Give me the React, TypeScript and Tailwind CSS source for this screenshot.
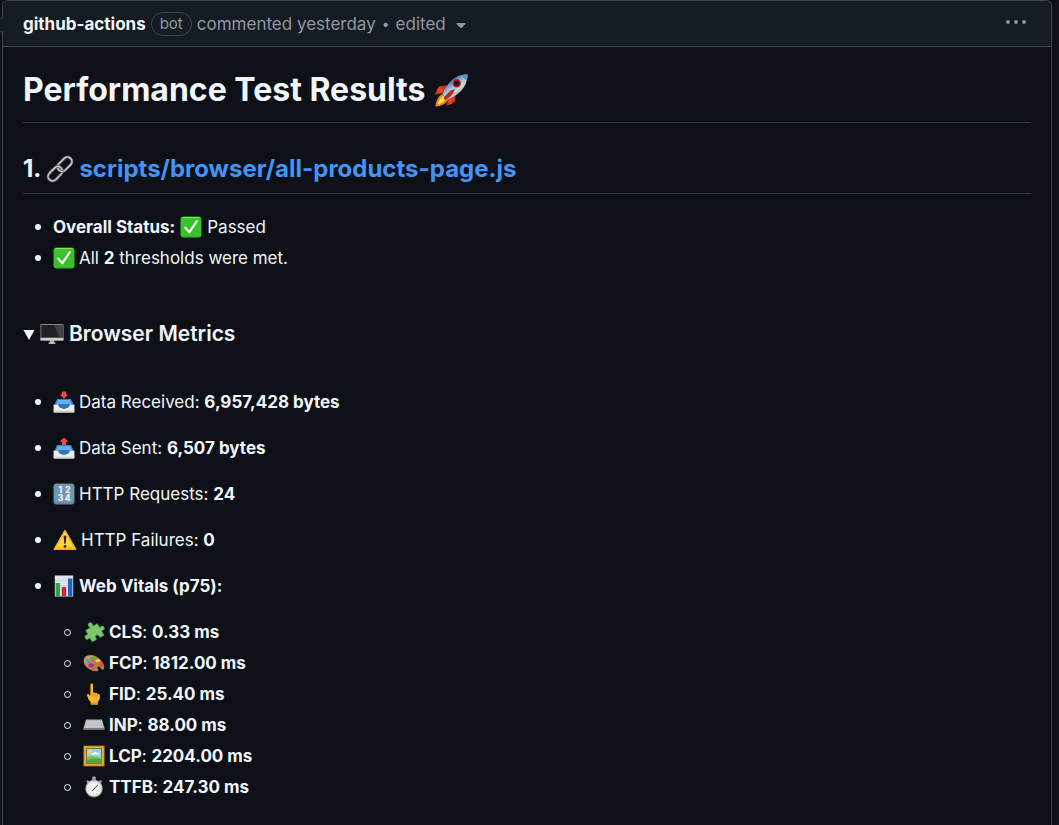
import type { ReactNode } from 'react';

function Rocket() {
  return (
    <svg viewBox="0 0 36 36" className="size-9 shrink-0" aria-hidden="true">
      <defs>
        <linearGradient id="rocketBody" x1="0.2" y1="0.1" x2="0.8" y2="0.9">
          <stop offset="0.2" stopColor="#3f78ad" />
          <stop offset="0.45" stopColor="#9fc0d8" />
          <stop offset="0.65" stopColor="#d5d9da" />
          <stop offset="1" stopColor="#5c6a74" />
        </linearGradient>
        <linearGradient id="rocketFin" x1="1" y1="0" x2="0" y2="1">
          <stop offset="0" stopColor="#b81d16" />
          <stop offset="0.6" stopColor="#ee4a1f" />
          <stop offset="1" stopColor="#8e1710" />
        </linearGradient>
      </defs>
      <path d="M14 13 L5 14.5 Q3 17 0.5 23 L9 21 Z" fill="url(#rocketFin)" />
      <path d="M22 20 L21 29 Q18 32 12 34.5 L14 26 Z" fill="url(#rocketFin)" />
      <path d="M8 22 Q2 26 1.5 34.5 Q10 34 14 28 Z" fill="#f58a1c" />
      <path d="M9 24 Q5 27 3.5 32.5 Q9 31 12 27 Z" fill="#ffe25a" />
      <path d="M33.5 2.5 Q24 1.5 16.5 9.5 Q11 15 8.5 22.5 L13.5 27.5 Q21 25 26.5 19.5 Q33.5 12 33.5 2.5 Z" fill="url(#rocketBody)" />
      <path d="M33.5 2.5 Q30 2.3 27.5 3.2 Q29.5 6.5 32.6 8.5 Q33.5 5.5 33.5 2.5 Z" fill="#5b94c7" />
      <path d="M21 17 Q14 19 9.5 26.5 L11 28 Q18 25 21 17 Z" fill="#bd2118" />
      <circle cx="22.7" cy="11.3" r="4.2" fill="#c4231e" />
      <circle cx="22.7" cy="11.3" r="2.9" fill="#241a22" />
    </svg>
  );
}

function ChainLink() {
  return (
    <svg viewBox="0 0 28 28" className="size-7 shrink-0" aria-hidden="true" fill="none">
      <g transform="rotate(-45 14 14)">
        <rect x="-1" y="9.5" width="16.5" height="9" rx="4.5" stroke="#606468" strokeWidth="3" />
        <rect x="-1" y="9.5" width="16.5" height="9" rx="4.5" stroke="#d3d5d6" strokeWidth="1.2" />
        <rect x="12.5" y="9.5" width="16.5" height="9" rx="4.5" stroke="#606468" strokeWidth="3" />
        <rect x="12.5" y="9.5" width="16.5" height="9" rx="4.5" stroke="#dfe0e1" strokeWidth="1.2" />
        <path d="M8 9.5 H11 Q15.5 9.5 15.5 14" stroke="#606468" strokeWidth="3" />
        <path d="M7 9.5 H11 Q15.5 9.5 15.5 14" stroke="#dfe0e1" strokeWidth="1.2" />
      </g>
    </svg>
  );
}

function Check() {
  return (
    <svg viewBox="0 0 22 22" className="size-[22px] shrink-0" aria-hidden="true">
      <rect x="0.5" y="0.5" width="21" height="21" rx="3.2" fill="#2fb32b" />
      <path d="M1.5 2.5 Q2 1 4 1 H18 Q20 1 20.5 2.5 Z" fill="#8be06d" />
      <rect x="1" y="2.2" width="20" height="18.4" rx="2.4" fill="#39c22c" />
      <path d="M5.3 11.6 L9.3 16.3 L16.8 5.2" fill="none" stroke="#fff" strokeWidth="2.1" strokeLinecap="round" strokeLinejoin="round" />
    </svg>
  );
}

function Desktop() {
  return (
    <svg viewBox="0 0 24 24" className="size-6 shrink-0" aria-hidden="true">
      <path d="M10 18 H14 L14.5 21.5 H9.5 Z" fill="#a7a9aa" />
      <rect x="8.5" y="20.6" width="7" height="1.2" rx="0.4" fill="#d2d3d4" />
      <rect x="0.5" y="2" width="23" height="16.5" rx="0.8" fill="#8e9092" />
      <rect x="0.5" y="15.8" width="23" height="2.8" rx="0.6" fill="#cbcdce" />
      <rect x="1.3" y="2.9" width="21.4" height="12.7" fill="#202123" />
      <path d="M14 2.9 H22.7 V15.6 H19.5 Z" fill="#3f4144" />
    </svg>
  );
}

function Tray({ down = false }: { down?: boolean }) {
  return (
    <svg viewBox="0 0 22 22" className="size-[22px] shrink-0" aria-hidden="true">
      <path d="M4 8 H18 L21.3 15 H0.7 Z" fill="#3b7fcb" />
      <path d="M5 9 H17 L19 13.8 H3 Z" fill="#67b0ef" />
      <path d="M0.6 13.8 H5 Q6.5 17.6 11 17.6 Q15.5 17.6 17 13.8 H21.4 V20.5 Q21.4 21.5 20.4 21.5 H1.6 Q0.6 21.5 0.6 20.5 Z" fill="#f1eee9" />
      <path d="M5 13 H17 Q15.5 17.6 11 17.6 Q6.5 17.6 5 13 Z" fill="#2f78c8" />
      <path d="M0.6 19.7 H21.4 V20.5 Q21.4 21.5 20.4 21.5 H1.6 Q0.6 21.5 0.6 20.5 Z" fill="#d4d0ca" />
      {down ? (
        <path d="M9 0.5 H13 V3.6 H15.3 L11 7.8 L6.7 3.6 H9 Z" fill="#ee4b3f" />
      ) : (
        <path d="M11 0.5 L15.3 4.7 H13 V8 H9 V4.7 H6.7 Z" fill="#ee4b3f" />
      )}
    </svg>
  );
}

function Numbers() {
  return (
    <svg viewBox="0 0 22 22" className="size-[22px] shrink-0" aria-hidden="true">
      <rect x="0.5" y="0.5" width="21" height="21" rx="3.2" fill="#5e86a8" />
      <rect x="1.1" y="1" width="19.8" height="18.5" rx="2.8" fill="#7297b5" />
      <g fill="#fff" fontFamily="Inter, sans-serif" fontWeight="700" fontSize="8.5" textAnchor="middle">
        <text x="7.4" y="10">1</text>
        <text x="14.6" y="10">2</text>
        <text x="7.4" y="18.4">3</text>
        <text x="14.6" y="18.4">4</text>
      </g>
    </svg>
  );
}

function Warning() {
  return (
    <svg viewBox="0 0 24 22" className="h-[22px] w-6 shrink-0" aria-hidden="true">
      <path d="M12 1.6 L22.6 20.2 H1.4 Z" fill="#fcc42f" stroke="#f2b01e" strokeWidth="1.6" strokeLinejoin="round" />
      <path d="M12 3 L20 17.5 H4 Z" fill="#ffd64b" />
      <path d="M10.6 7.2 Q12 5.8 13.4 7.2 L12.7 14.8 H11.3 Z" fill="#33281c" />
      <circle cx="12" cy="17.4" r="1.4" fill="#33281c" />
    </svg>
  );
}

function Bars() {
  return (
    <svg viewBox="0 0 22 22" className="size-[22px] shrink-0" aria-hidden="true">
      <rect x="1.8" y="0.5" width="18.4" height="21" fill="#dce3ee" />
      <path d="M2 5.5 H20 M2 10.5 H20 M2 15.5 H20" stroke="#b8c3d2" strokeWidth="0.6" />
      <rect x="2.6" y="8" width="4.4" height="13" fill="#33a642" />
      <rect x="8.8" y="12" width="4.4" height="9" fill="#cc2636" />
      <rect x="15" y="3.5" width="4.4" height="17.5" fill="#2461bd" />
    </svg>
  );
}

function Puzzle() {
  return (
    <svg viewBox="0 0 22 22" className="size-[22px] shrink-0" aria-hidden="true">
      <g transform="rotate(-30 11 11)">
        <path
          d="M4.6 5.5 H9 Q10 5.3 9.5 4.2 Q8.6 0.8 11.4 0.8 Q14.2 0.8 13.4 4.2 Q12.9 5.3 13.9 5.5 H18 V9.3 Q18.2 10.4 19.3 9.9 Q22 9.4 22 11.9 Q22 14.4 19.3 13.9 Q18.2 13.4 18 14.5 V18.7 H14 Q12.9 18.5 13.4 17.4 Q13.9 14.9 11.5 14.9 Q9.1 14.9 9.6 17.4 Q10.1 18.5 9 18.7 H4.6 V14.8 Q4.4 13.7 3.3 14.2 Q0.4 14.6 0.4 12 Q0.4 9.4 3.3 9.9 Q4.4 10.4 4.6 9.3 Z"
          fill="#7cc66c"
          stroke="#54a556"
          strokeWidth="0.7"
        />
      </g>
    </svg>
  );
}

function Palette() {
  return (
    <svg viewBox="0 0 22 22" className="size-[22px] shrink-0" aria-hidden="true">
      <path d="M7 3 Q1 3.4 0.6 8.5 Q0.5 13.5 5.5 16.7 Q10 19.6 14 19.3 Q16.3 18.8 14.8 16.6 Q13.7 14.7 15.5 14.5 Q17 14.5 18 16.7 Q19.5 18.8 21 16.5 Q22.3 13 18 8.2 Q13 2.8 7 3 Z" fill="#bd7b3d" />
      <path d="M7 3.6 Q2 4 1.5 8 Q1.8 12 6 15 Q3.5 11 5 7.5 Q7 5 13 6 Q10 3.6 7 3.6 Z" fill="#d59a58" />
      <ellipse cx="5" cy="8.4" rx="2.4" ry="1.6" fill="#34a7de" />
      <ellipse cx="9.7" cy="5.8" rx="2.4" ry="1.5" fill="#49b848" />
      <ellipse cx="14.8" cy="8.6" rx="2.4" ry="1.5" fill="#f6cf37" />
      <ellipse cx="18.3" cy="12.8" rx="1.9" ry="1.7" fill="#e8403f" />
      <ellipse cx="8.3" cy="13.3" rx="2.8" ry="1.9" fill="#8438c4" />
    </svg>
  );
}

function Finger() {
  return (
    <svg viewBox="0 0 22 22" className="size-[22px] shrink-0" aria-hidden="true">
      <path d="M7.4 1.8 Q7.5 0.4 8.7 0.4 Q10 0.4 10 1.8 V9.6 Q11.2 9 12 10 Q13.4 9.4 14.2 10.7 Q16.8 10.3 17 13 Q17.3 16.4 15 19 V21.6 H7.8 V19.4 Q5 17 4 12.3 Q4 10.7 5.4 11 L7.4 13 Z" fill="#fbb42c" />
      <path d="M10 9.6 V13.5 M12.1 10.2 V13.8 M14.2 10.8 V14" stroke="#c77d16" strokeWidth="0.7" fill="none" />
      <path d="M7.8 19.4 Q11 20.4 15 19 V21.6 H7.8 Z" fill="#e19420" />
    </svg>
  );
}

function Keyboard() {
  return (
    <svg viewBox="0 0 22 22" className="size-[22px] shrink-0" aria-hidden="true">
      <path d="M3 5.4 H19 L21.6 14.6 H0.4 Z" fill="#aeb1b3" />
      <path d="M0.4 14.4 H21.6 V15.8 H0.4 Z" fill="#898c8f" />
      <path d="M3.4 7.2 H18.6 M2.9 9.1 H19.1 M2.4 11 H19.6 M2 12.9 H20" stroke="#dcddde" strokeWidth="1.1" strokeDasharray="1.4 0.4" />
    </svg>
  );
}

function Picture() {
  return (
    <svg viewBox="0 0 22 22" className="size-[22px] shrink-0" aria-hidden="true">
      <rect x="0.4" y="0.6" width="21.2" height="20.8" fill="#a9781b" />
      <rect x="1.2" y="1.4" width="19.6" height="19.2" fill="#dfad39" />
      <rect x="3" y="3.2" width="16" height="15.6" fill="#86611b" />
      <rect x="3.8" y="4" width="14.4" height="14" fill="#8dd2ef" />
      <circle cx="7" cy="7" r="2" fill="#f8dc49" />
      <path d="M9 9 Q9.4 7.3 11 7.8 Q12.5 6 14.2 7.7 Q16.4 7.5 16.6 9.4 H9 Z" fill="#fff" />
      <path d="M3.8 12.2 Q9 9.5 18.2 12.8 V18 H3.8 Z" fill="#7cc553" />
      <path d="M3.8 15.6 Q10 12.5 18.2 14.2 V18 H3.8 Z" fill="#4fa43b" />
    </svg>
  );
}

function Stopwatch() {
  return (
    <svg viewBox="0 0 22 22" className="size-[22px] shrink-0" aria-hidden="true">
      <path d="M9.3 0.6 H12.7 V4.5 H9.3 Z" fill="#a8abad" />
      <path d="M3.2 5.4 L4.8 4 L6.6 5.8 L5 7.4 Z M15.4 5.8 L17.2 4 L19.4 5.4 L17 7.4 Z" fill="#9c9fa1" />
      <circle cx="11" cy="12.6" r="8.8" fill="#8a8d8f" />
      <circle cx="11" cy="12.4" r="8.2" fill="#c9cbcc" />
      <circle cx="11" cy="12.6" r="7.2" fill="#f5f4f1" />
      <circle cx="11" cy="12.6" r="5.8" fill="none" stroke="#77797b" strokeWidth="1" strokeDasharray="0.5 2.54" />
      <path d="M11 13 L14.6 9.2 M11 13 L9.6 14.6" stroke="#424548" strokeWidth="1" strokeLinecap="round" />
    </svg>
  );
}

function Item({ icon, hollow = false, children }: { icon?: ReactNode; hollow?: boolean; children: ReactNode }) {
  return (
    <li className="flex items-center">
      <span
        className={
          hollow
            ? 'mr-3 size-[7px] shrink-0 rounded-full border border-[#f0f6fc]'
            : 'mr-3 size-1.5 shrink-0 rounded-full bg-[#f0f6fc]'
        }
      />
      {icon}
      <span className={icon ? 'ml-1' : ''}>{children}</span>
    </li>
  );
}

const vitals = [
  { name: 'CLS', value: '0.33 ms', icon: <Puzzle /> },
  { name: 'FCP', value: '1812.00 ms', icon: <Palette /> },
  { name: 'FID', value: '25.40 ms', icon: <Finger /> },
  { name: 'INP', value: '88.00 ms', icon: <Keyboard /> },
  { name: 'LCP', value: '2204.00 ms', icon: <Picture /> },
  { name: 'TTFB', value: '247.30 ms', icon: <Stopwatch /> },
];

export default function App() {
  return (
    <div className="flex min-h-screen bg-[#0d1117] pr-[7px] font-['Inter','Noto_Sans',sans-serif] text-[17px] leading-[26px] text-[#f0f6fc]">
      <svg viewBox="0 0 4 16" className="z-10 mt-[17px] -mr-0.5 h-4 w-1 shrink-0" aria-hidden="true">
        <path d="M4 0 V16 L0 12 V4 Z" fill="#151b23" />
        <path d="M2.5 0 L0 2.5 M2.5 16 L0 13.5" stroke="#3d444d" />
      </svg>
      <article className="min-w-0 flex-1 rounded-t-md border border-b-0 border-[#3d444d]">
        <header className="flex h-[46px] items-center rounded-t-md border-b border-[#3d444d] bg-[#151b23] px-5 text-[#9198a1]">
          <a href="#author" className="font-bold text-[#f0f6fc]">github-actions</a>
          <span className="mx-[5px] rounded-full border border-[#3d444d] px-2 text-[15px] leading-[22px]">bot</span>
          <span>commented <a href="#comment">yesterday</a></span>
          <span className="mx-1.5 text-sm">•</span>
          <button type="button" className="flex items-center gap-2.5">
            edited
            <svg viewBox="0 0 10 6" className="mt-1 h-1.5 w-2.5" fill="currentColor" aria-hidden="true">
              <path d="M0.8 0 H9.2 Q10 0.2 9.4 1 L5.5 4.9 Q5 5.3 4.5 4.9 L0.6 1 Q0 0.2 0.8 0 Z" />
            </svg>
          </button>
          <button type="button" aria-label="Show options" className="mr-1 ml-auto">
            <svg viewBox="0 0 22 6" className="mb-1 h-1.5 w-[22px]" fill="currentColor" aria-hidden="true">
              <circle cx="3" cy="3" r="1.9" />
              <circle cx="11" cy="3" r="1.9" />
              <circle cx="19" cy="3" r="1.9" />
            </svg>
          </button>
        </header>

        <div className="px-5 pt-5">
          <h1 className="flex items-center gap-2 border-b border-[#2f353d] pb-2.5 text-[32px] leading-[45px] font-bold">
            Performance Test Results <Rocket />
          </h1>
          <h2 className="mt-7 flex items-center gap-[5px] border-b border-[#2f353d] pb-[7px] text-2xl leading-[35px] font-bold">
            1. <ChainLink />
            <a href="#script" className="text-[#4493f8]">scripts/browser/all-products-page.js</a>
          </h2>

          <ul className="mt-5 space-y-[5px] pl-3">
            <Item>
              <span className="flex items-center gap-[5px]">
                <strong className="font-bold">Overall Status:</strong> <Check /> Passed
              </span>
            </Item>
            <Item icon={<Check />}>
              All <strong className="font-bold">2</strong> thresholds were met.
            </Item>
          </ul>

          <details open className="mt-[47px]">
            <summary className="flex items-center gap-[5px] leading-8">
              <svg viewBox="0 0 12 12" className="size-3" fill="currentColor" aria-hidden="true">
                <path d="M0.5 2 H11.5 L6 12 Z" />
              </svg>
              <Desktop />
              <h3 className="text-[21px] font-semibold">Browser Metrics</h3>
            </summary>
            <ul className="mt-[39px] space-y-5 pl-3">
              <Item icon={<Tray down />}>
                Data Received: <strong className="font-bold">6,957,428 bytes</strong>
              </Item>
              <Item icon={<Tray />}>
                Data Sent: <strong className="font-bold">6,507 bytes</strong>
              </Item>
              <Item icon={<Numbers />}>
                HTTP Requests: <strong className="font-bold">24</strong>
              </Item>
              <Item icon={<Warning />}>
                HTTP Failures: <strong className="font-bold">0</strong>
              </Item>
              <Item icon={<Bars />}>
                <strong className="font-bold">Web Vitals (p75):</strong>
              </Item>
            </ul>
            <ul className="mt-5 space-y-[5px] pl-[41px]">
              {vitals.map((vital) => (
                <Item key={vital.name} icon={vital.icon} hollow>
                  <strong className="font-bold">{vital.name}</strong>:{' '}
                  <strong className="font-bold">{vital.value}</strong>
                </Item>
              ))}
            </ul>
          </details>
        </div>
      </article>
    </div>
  );
}
